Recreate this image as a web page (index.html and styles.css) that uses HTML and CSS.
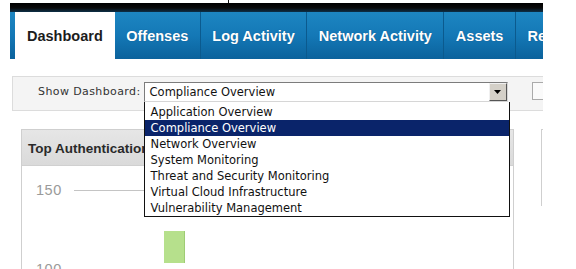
FILE: index.html
```html
<!DOCTYPE html>
<html>
<head>
<meta charset="utf-8">
<link rel="stylesheet" href="styles.css">
</head>
<body>
<div class="page">
  <div class="tick-row"><span class="tick"></span></div>
  <div class="nav">
    <div class="nav-strip"></div>
    <ul class="tabs">
      <li class="tab active">Dashboard</li>
      <li class="tab">Offenses</li>
      <li class="tab">Log Activity</li>
      <li class="tab">Network Activity</li>
      <li class="tab">Assets</li>
      <li class="tab">Reports</li>
    </ul>
  </div>
  <div class="toolbar">
    <span class="tb-label">Show Dashboard:</span>
    <div class="select">
      <span class="select-value">Compliance Overview</span>
      <span class="select-btn"><svg width="7" height="4" viewBox="0 0 7 4"><path d="M0 0H7L3.5 4Z" fill="#000"/></svg></span>
      <ul class="select-list">
        <li class="opt">Application Overview</li>
        <li class="opt selected">Compliance Overview</li>
        <li class="opt">Network Overview</li>
        <li class="opt">System Monitoring</li>
        <li class="opt">Threat and Security Monitoring</li>
        <li class="opt">Virtual Cloud Infrastructure</li>
        <li class="opt">Vulnerability Management</li>
      </ul>
    </div>
    <span class="tb-check"></span>
  </div>
  <div class="widgets">
    <div class="widget">
      <div class="widget-title">Top Authentication Failures</div>
      <div class="widget-body">
        <div class="axis-row"><span class="axis-label">150</span><span class="gridline"></span></div>
        <div class="bar-row"><span class="bar"></span></div>
        <div class="axis-row"><span class="axis-label">100</span></div>
      </div>
    </div>
    <div class="widget widget-2"></div>
  </div>
</div>
</body>
</html>
```
FILE: styles.css
```css
html, body {
  margin: 0;
  padding: 0;
  background: #fff;
}
.page {
  margin-left: 10px;
  width: 533px;
  height: 269px;
  overflow: hidden;
  font-family: "Liberation Sans", Arial, sans-serif;
}
.tick-row {
  height: 3px;
}
.tick {
  display: block;
  margin-left: 218px;
  width: 1px;
  height: 3px;
  background: #111;
}
.nav-strip {
  height: 9px;
  background: linear-gradient(to bottom, #000 0%, #0a0a0a 55%, #0c2f48 100%);
}
.tabs {
  display: flex;
  margin: 0;
  padding: 0 0 0 5px;
  list-style: none;
  height: 47px;
  background: linear-gradient(to bottom, #1d86c2 0%, #1478b6 50%, #0b629c 100%);
}
.tab {
  display: flex;
  align-items: center;
  padding: 0 11.5px;
  border-right: 1px solid #0b5a8e;
  color: #fff;
  font-weight: bold;
  font-size: 14.5px;
  white-space: nowrap;
  text-shadow: 0 0 1px rgba(0,40,80,0.5);
}
.tab.active {
  background: #fff;
  color: #1c1c1c;
  padding: 0 12px;
  border-right: none;
  text-shadow: none;
}
.toolbar {
  display: flex;
  align-items: flex-start;
  margin: 17px 0 0 2px;
  width: 545px;
  padding-top: 5px;
  box-sizing: border-box;
  height: 35px;
  border: 1px solid #dcdcdc;
  background: #f4f4f4;
  font-family: "DejaVu Sans", Tahoma, sans-serif;
  font-size: 11px;
}
.tb-label {
  margin-left: 25px;
  line-height: 20px;
  color: #333;
  letter-spacing: 0.4px;
}
.select {
  position: relative;
  display: flex;
  align-items: center;
  margin-left: 3px;
  width: 364px;
  height: 20px;
  box-sizing: border-box;
  border: 1px solid;
  border-color: #7c7c7c #d6d6d6 #d6d6d6 #7c7c7c;
  background: #fff;
}
.select-value {
  flex: 1;
  padding-left: 5px;
  color: #111;
  font-size: 11.5px;
}
.select-btn {
  display: flex;
  align-items: center;
  justify-content: center;
  width: 18px;
  height: 18px;
  box-sizing: border-box;
  background: #d4d0c8;
  border: 1px solid;
  border-color: #f0f0f0 #555 #555 #f0f0f0;
}
.select-list {
  position: absolute;
  top: 19px;
  left: -1px;
  width: 366px;
  margin: 0;
  padding: 2px 0 0;
  list-style: none;
  background: #fff;
  box-sizing: border-box;
  border: 1px solid #111;
  border-top: none;
}
.opt {
  height: 16px;
  line-height: 16px;
  padding-left: 6px;
  color: #111;
  font-size: 11.5px;
  white-space: nowrap;
}
.opt.selected {
  background: #0a246a;
  color: #fff;
}
.tb-check {
  margin-left: 24px;
  width: 18px;
  height: 18px;
  box-sizing: border-box;
  border: 1px solid #aaa;
  background: #fafafa;
}
.widgets {
  display: flex;
  align-items: flex-start;
  margin-top: 18px;
}
.widget {
  flex-shrink: 0;
  margin-left: 11px;
  width: 493px;
  height: 140px;
  box-sizing: border-box;
  border: 1px solid #cfcfcf;
  border-bottom: none;
  overflow: hidden;
}
.widget-2 {
  margin-left: 27px;
  width: 20px;
  height: 77px;
  border-right: none;
}
.widget-title {
  height: 35px;
  line-height: 38px;
  padding-left: 6px;
  background: linear-gradient(to bottom, #e6e6e6, #dadada);
  border-bottom: 1px solid #d0d0d0;
  color: #2a2a2a;
  font-weight: bold;
  font-size: 13.5px;
  white-space: nowrap;
}
.widget-body {
  padding-left: 14px;
}
.axis-row {
  display: flex;
  align-items: center;
  margin-top: 17px;
  height: 14px;
}
.axis-row + .bar-row + .axis-row {
  margin-top: 0;
}
.axis-label {
  color: #9a9a9a;
  font-size: 14.5px;
  letter-spacing: 0.5px;
}
.gridline {
  margin-left: 12px;
  width: 420px;
  height: 1px;
  background: #c4c4c4;
}
.bar-row {
  height: 31px;
  padding-top: 34px;
}
.bar {
  display: block;
  margin-left: 128px;
  width: 20px;
  height: 32px;
  background: #b6e08c;
  border-right: 1px solid #9fcc74;
}
```
